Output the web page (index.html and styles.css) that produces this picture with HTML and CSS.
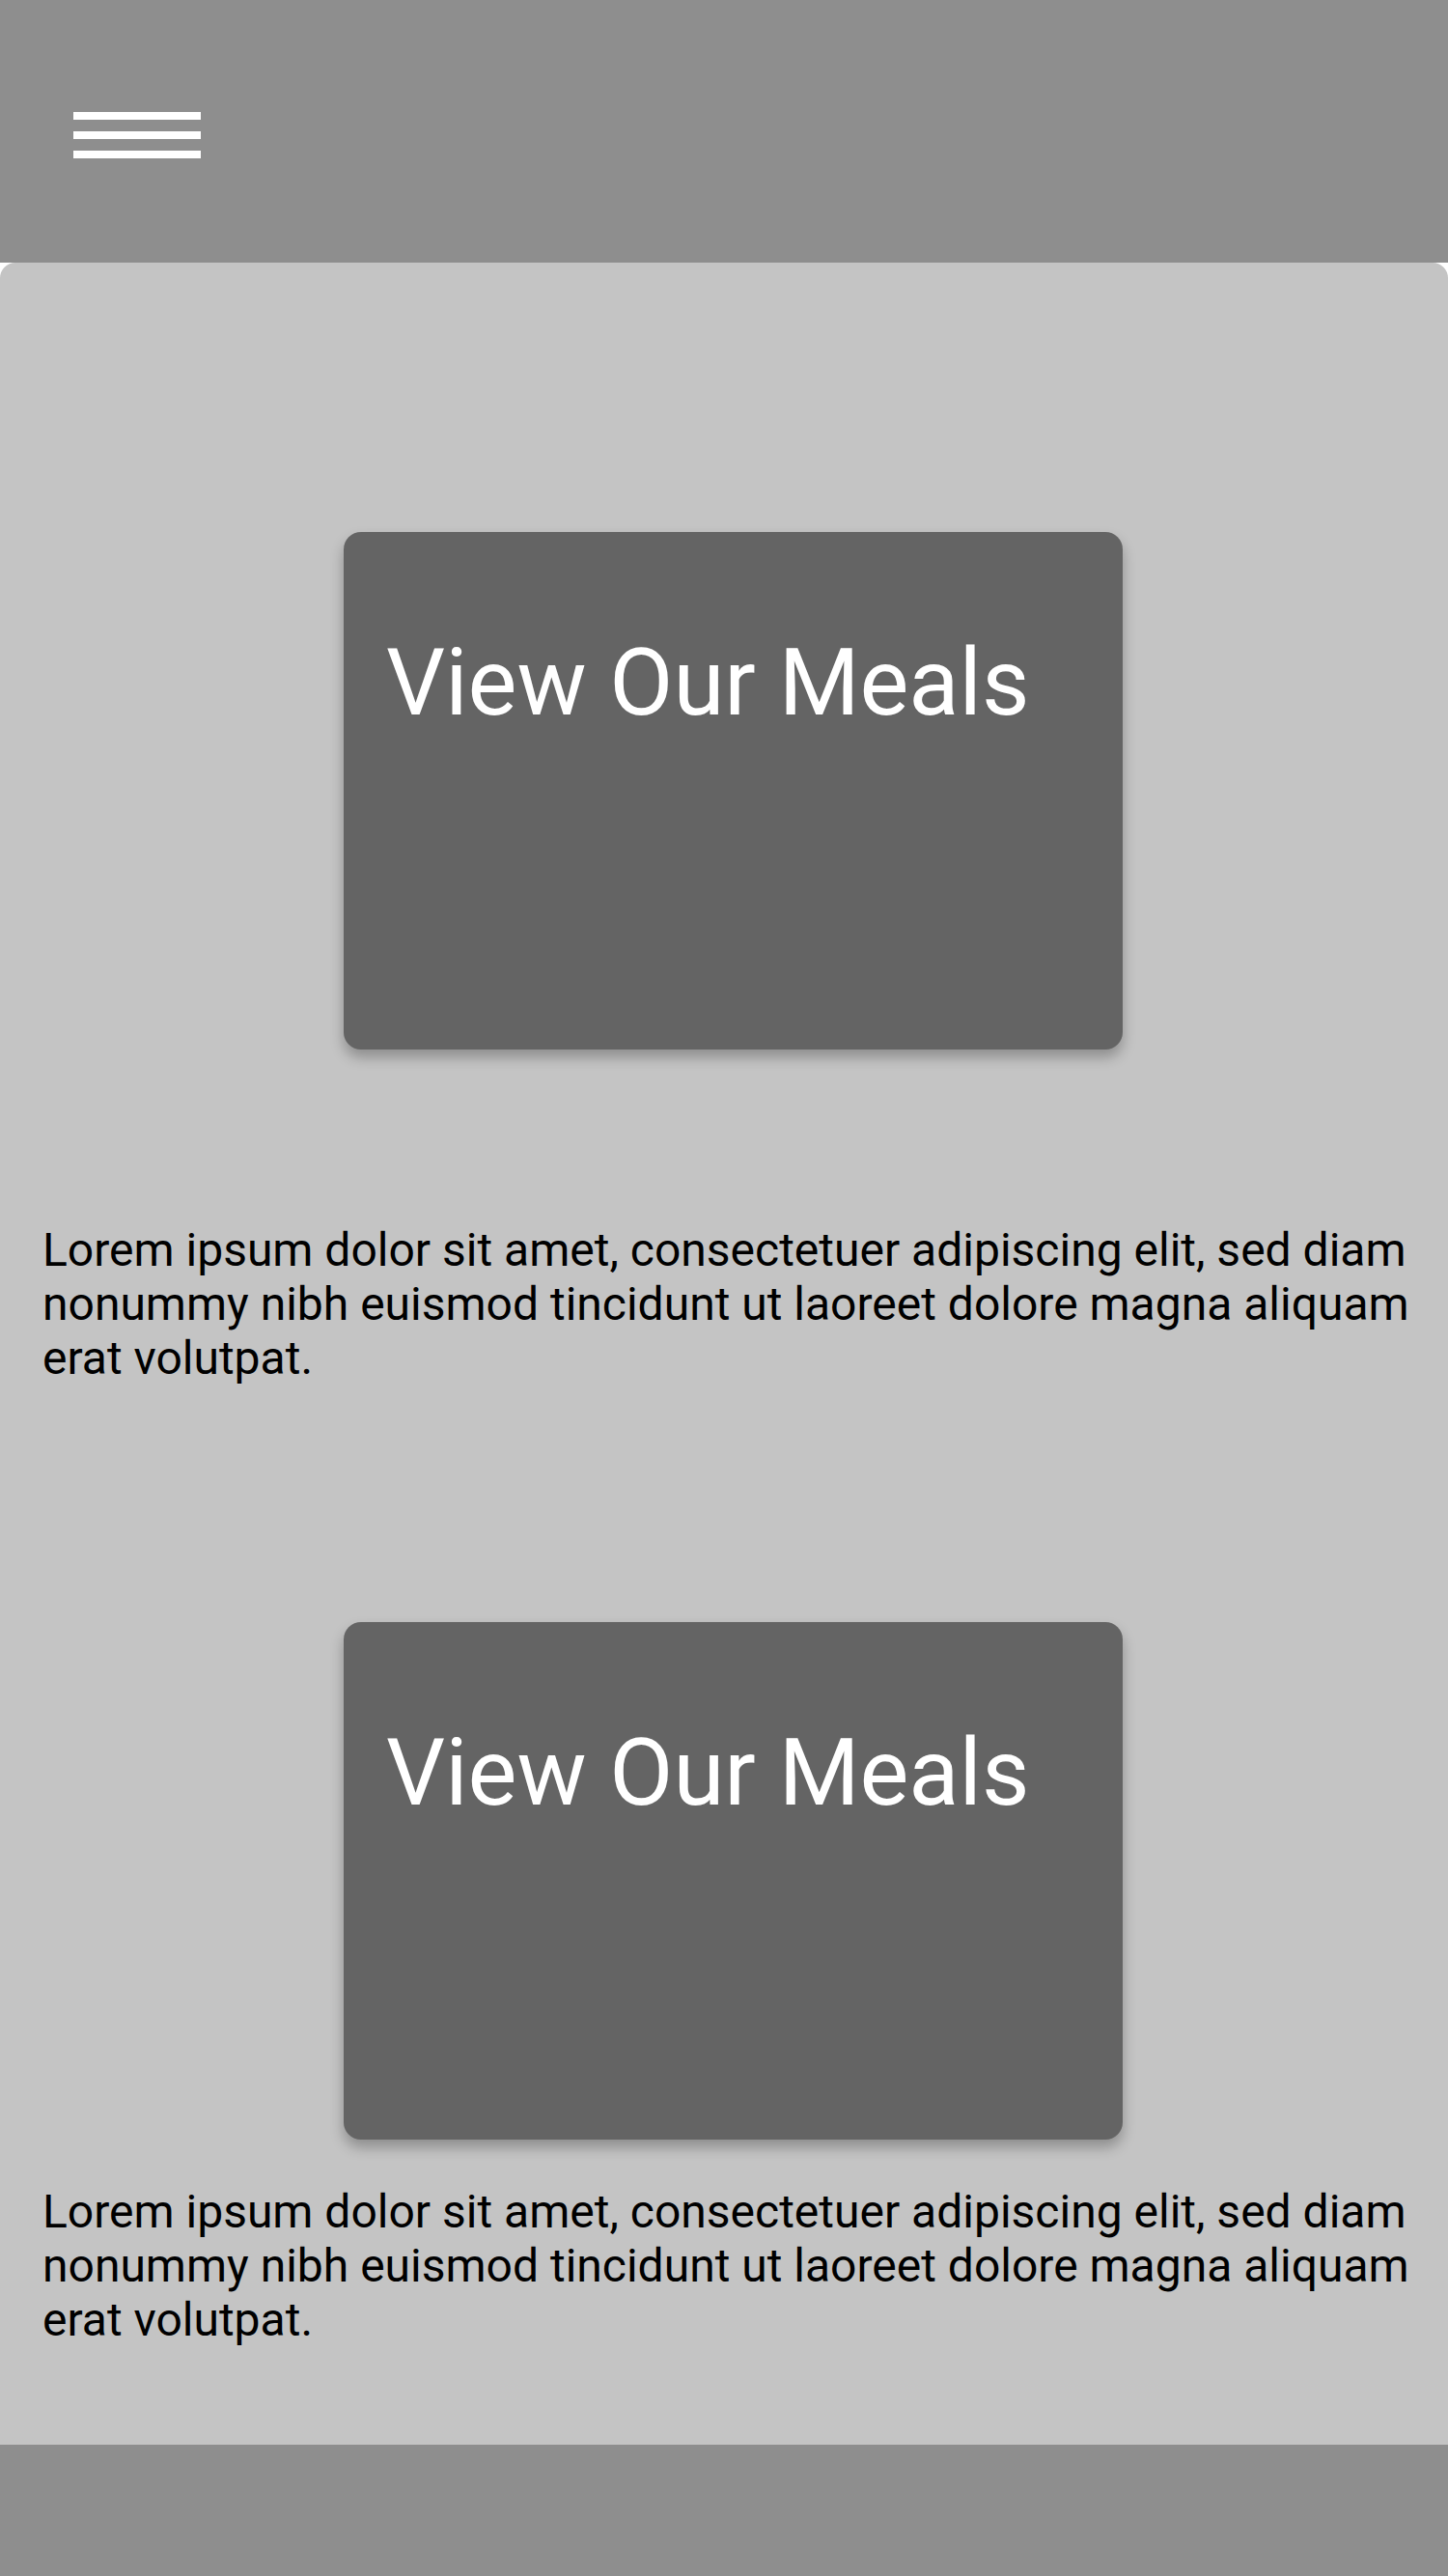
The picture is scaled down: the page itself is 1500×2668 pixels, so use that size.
FILE: index.html
```html
<!DOCTYPE html>
<html lang="en">
<head>
<meta charset="utf-8">
<title>Meals</title>
<link rel="stylesheet" href="styles.css">
</head>
<body>
<header class="topbar">
  <button class="menu" aria-label="Menu">
    <span class="bar"></span>
    <span class="bar"></span>
    <span class="bar"></span>
  </button>
</header>
<main class="content">
  <section class="block block-first">
    <a class="meal-card" href="#">
      <h2 class="meal-title">View Our Meals</h2>
    </a>
    <p class="blurb blurb-first">Lorem ipsum dolor sit amet, consectetuer adipiscing elit, sed diam nonummy nibh euismod tincidunt ut laoreet dolore magna aliquam erat volutpat.</p>
  </section>
  <section class="block block-second">
    <a class="meal-card" href="#">
      <h2 class="meal-title">View Our Meals</h2>
    </a>
    <p class="blurb blurb-second">Lorem ipsum dolor sit amet, consectetuer adipiscing elit, sed diam nonummy nibh euismod tincidunt ut laoreet dolore magna aliquam erat volutpat.</p>
  </section>
</main>
<footer class="bottombar"></footer>
</body>
</html>
```

FILE: styles.css
```css
html, body {
  margin: 0;
  padding: 0;
  background: #ffffff;
}

body {
  font-family: Roboto, "Liberation Sans", sans-serif;
  width: 1500px;
}

.topbar {
  height: 272px;
  background: #8e8e8e;
  box-sizing: border-box;
  padding: 116px 0 0 76px;
}

.menu {
  display: flex;
  flex-direction: column;
  gap: 12px;
  padding: 0;
  margin: 0;
  border: 0;
  background: transparent;
  cursor: pointer;
}

.bar {
  display: block;
  width: 132px;
  height: 8px;
  background: #ffffff;
}

.content {
  height: 2260px;
  box-sizing: border-box;
  background: #c4c4c4;
  border-radius: 16px 16px 0 0;
  padding: 279px 16px 0 44px;
}

.block {
  display: flex;
  flex-direction: column;
}

.block-second {
  margin-top: 245px;
}

.meal-card {
  align-self: flex-start;
  margin-left: 312px;
  width: 807px;
  height: 536px;
  box-sizing: border-box;
  padding: 100px 0 0 44px;
  background: #646464;
  border-radius: 18px;
  box-shadow: 0 8px 14px rgba(0, 0, 0, 0.28);
  text-decoration: none;
}

.meal-title {
  margin: 0;
  font-size: 96px;
  font-weight: 400;
  line-height: normal;
  color: #ffffff;
}

.blurb {
  margin: 0;
  font-size: 48px;
  line-height: 56px;
  color: #000000;
}

.blurb-first {
  margin-top: 180px;
}

.blurb-second {
  margin-top: 47px;
}

.bottombar {
  height: 136px;
  background: #8e8e8e;
}
```
